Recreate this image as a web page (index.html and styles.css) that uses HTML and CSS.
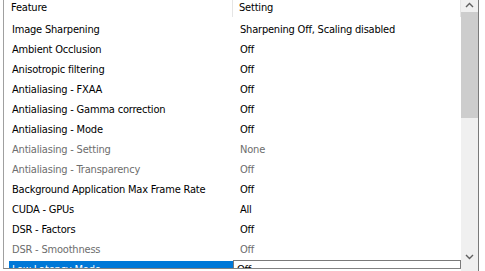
FILE: index.html
```html
<!DOCTYPE html>
<html>
<head>
<meta charset="utf-8">
<link rel="stylesheet" href="styles.css">
</head>
<body>
<div class="window">
  <div class="list">
    <div class="header">
      <div class="hcell feature">Feature</div>
      <div class="hcell setting">Setting</div>
    </div>
    <div class="row"><div class="c1">Image Sharpening</div><div class="c2">Sharpening Off, Scaling disabled</div></div>
    <div class="row"><div class="c1">Ambient Occlusion</div><div class="c2">Off</div></div>
    <div class="row"><div class="c1">Anisotropic filtering</div><div class="c2">Off</div></div>
    <div class="row"><div class="c1">Antialiasing - FXAA</div><div class="c2">Off</div></div>
    <div class="row"><div class="c1">Antialiasing - Gamma correction</div><div class="c2">Off</div></div>
    <div class="row"><div class="c1">Antialiasing - Mode</div><div class="c2">Off</div></div>
    <div class="row disabled"><div class="c1">Antialiasing - Setting</div><div class="c2">None</div></div>
    <div class="row disabled"><div class="c1">Antialiasing - Transparency</div><div class="c2">Off</div></div>
    <div class="row"><div class="c1">Background Application Max Frame Rate</div><div class="c2">Off</div></div>
    <div class="row"><div class="c1">CUDA - GPUs</div><div class="c2">All</div></div>
    <div class="row"><div class="c1">DSR - Factors</div><div class="c2">Off</div></div>
    <div class="row disabled"><div class="c1">DSR - Smoothness</div><div class="c2">Off</div></div>
    <div class="row selected"><div class="c1"><span class="sel">Low Latency Mode</span></div><div class="c2"><div class="combo">Off</div></div></div>
  </div>
  <div class="scrollbar">
    <div class="arrow up"><svg width="9" height="6" viewBox="0 0 9 6"><path d="M1 5 L4.5 1.5 L8 5" fill="none" stroke="#606060" stroke-width="1.4"/></svg></div>
    <div class="thumb"></div>
    <div class="track"></div>
    <div class="arrow down"><svg width="9" height="6" viewBox="0 0 9 6"><path d="M1 1 L4.5 4.5 L8 1" fill="none" stroke="#606060" stroke-width="1.4"/></svg></div>
  </div>
  <div class="edge"></div>
</div>
</body>
</html>
```

FILE: styles.css
```css
html, body {
  margin: 0;
  padding: 0;
  background: #ffffff;
}

body {
  font-family: "DejaVu Sans Condensed", "DejaVu Sans", sans-serif;
  font-size: 11px;
  letter-spacing: -0.2px;
  color: #000000;
}

.window {
  display: flex;
  width: 485px;
  height: 271px;
  padding-left: 3px;
  box-sizing: border-box;
  overflow: hidden;
}

.list {
  width: 457px;
  height: 268px;
  border-left: 1px solid #a0a0a0;
  border-bottom: 1px solid #828282;
  overflow: hidden;
  display: flex;
  flex-direction: column;
  flex-shrink: 0;
}

.header {
  display: flex;
  height: 17px;
  margin-bottom: 3px;
  flex-shrink: 0;
}

.hcell {
  line-height: 14px;
  height: 17px;
  padding-top: 1px;
  box-sizing: border-box;
}

.hcell.feature {
  width: 229px;
  padding-left: 7px;
  border-right: 1px solid #e5e5e5;
}

.hcell.setting {
  flex: 1;
  padding-left: 6px;
  border-right: 1px solid #e5e5e5;
}

.row {
  display: flex;
  height: 20px;
  flex-shrink: 0;
}

.c1 {
  width: 229px;
  padding-left: 8px;
  padding-top: 2px;
  box-sizing: border-box;
  line-height: 16px;
  white-space: nowrap;
}

.c2 {
  flex: 1;
  padding-left: 7px;
  padding-top: 2px;
  line-height: 16px;
  white-space: nowrap;
}

.row.disabled {
  color: #6d6d6d;
}

.row.selected .c1 {
  padding-left: 5px;
  padding-top: 1px;
}

.sel {
  display: block;
  background: #0078d7;
  color: #ffffff;
  padding-left: 3px;
  height: 19px;
  line-height: 17px;
  width: 224px;
  box-sizing: border-box;
}

.row.selected .c2 {
  padding-left: 0;
  padding-top: 0;
}

.combo {
  width: 228px;
  height: 20px;
  box-sizing: border-box;
  border: 1px solid #7a7a7a;
  padding-left: 3px;
  line-height: 17px;
}

.scrollbar {
  width: 17px;
  height: 271px;
  background: #f0f0f0;
  display: flex;
  flex-direction: column;
  flex-shrink: 0;
}

.arrow {
  height: 12px;
  display: flex;
  justify-content: center;
  align-items: center;
  flex-shrink: 0;
}

.arrow.up {
  align-items: flex-start;
  padding-top: 2px;
  height: 10px;
}

.arrow.down {
  height: 20px;
  align-items: flex-start;
  padding-top: 3px;
  box-sizing: border-box;
}

.thumb {
  height: 106px;
  background: #cdcdcd;
  flex-shrink: 0;
}

.track {
  flex: 1;
}

.edge {
  width: 1px;
  height: 271px;
  background: #7a7a7a;
  flex-shrink: 0;
}
```
